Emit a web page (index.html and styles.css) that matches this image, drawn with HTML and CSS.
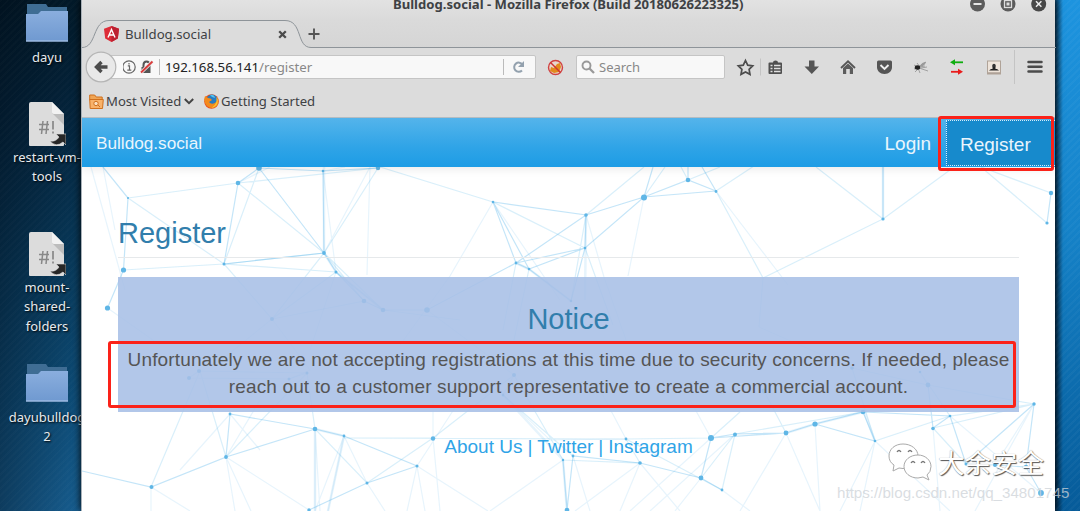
FILE: index.html
```
<!DOCTYPE html>
<html lang="en">
<head>
<meta charset="utf-8">
<title>Bulldog.social</title>
<link rel="stylesheet" href="styles.css">
</head>
<body>
<svg width="0" height="0" class="defs">
  <defs>
    <linearGradient id="fold" x1="0" y1="0" x2="0" y2="1"><stop offset="0" stop-color="#8aaede"/><stop offset="1" stop-color="#6f99d0"/></linearGradient>
    <symbol id="folder" viewBox="0 0 42 38"><path d="M1 0h19l2 3h19v20H1z" fill="#3f6d94"/><path d="M0 10h12l3-3h27v30.500H0z" fill="url(#fold)"/><path d="M0 37h42" stroke="#b3caea"/></symbol>
    <symbol id="script" viewBox="0 0 37 45"><path d="M2 0h21l12 12v31q0 1-1 1H1q-1 0-1-1V2q0-2 2-2z" fill="#dcdcdc"/><path d="M23 11l12 12V12z" fill="#bdbdbd"/><path d="M23 0v10q0 2 2 2h10z" fill="#f2f2f2"/><path d="M10 22.500h10M10 27.500h10M14 19l-1.500 13M18.500 19L17 32" stroke="#888" stroke-width="1.500"/><path d="M24 19v8.500M24 29.500v2" stroke="#888" stroke-width="1.700"/><path d="M27 32h10v11l-3-3q-7 6-13-1 6 1 9-4z" fill="#272727" stroke="#ddd" stroke-width=".6"/></symbol>
  </defs>
</svg>
<div class="desktop">
  <div class="shortcuts">
    <div class="slot first"><svg class="folder"><use href="#folder"/></svg><span>dayu</span></div>
    <div class="slot"><svg class="script"><use href="#script"/></svg><span>restart-vm-<br>tools</span></div>
    <div class="slot"><svg class="script"><use href="#script"/></svg><span>mount-<br>shared-<br>folders</span></div>
    <div class="slot"><svg class="folder"><use href="#folder"/></svg><span>dayubulldog<br>2</span></div>
  </div>

  <div class="window">
    <div class="titlebar">
      <div class="title">Bulldog.social - Mozilla Firefox (Build 20180626223325)</div>
      <svg class="controls" width="80" height="13" viewBox="0 0 80 13"><g fill="#5c5c5c"><circle cx="8.500" cy="4" r="7.500"/><circle cx="39" cy="4" r="7.500"/><circle cx="69.700" cy="4" r="7.500" fill="#484848"/></g><path d="M4.500 4h8" stroke="#e5e5e5" stroke-width="2"/><rect x="35.500" y=".5" width="7" height="7" fill="none" stroke="#ddd" stroke-width="1.300"/><rect x="37.500" y="2.500" width="3" height="3" fill="#ddd"/><path d="M67 1.300l5.400 5.400m0-5.400L67 6.700" stroke="#eee" stroke-width="1.500"/></svg>
    </div>
    <div class="tabs">
      <svg class="tabshape" width="974" height="28" viewBox="0 0 974 28"><path d="M0 26.500C15 26.500 10 .5 27 .5H203C221 .5 214 27.500 229 27.500V28H0z" fill="#dcdcdc"/><path d="M0 27.500C15 27.500 10 .5 27 .5H203C221 .5 214 27.500 229 27.500H974" fill="none" stroke="#8e9499"/></svg>
      <div class="tab">
        <svg width="15" height="16" viewBox="0 0 15 16"><path d="M7.500 0L15 2.700l-1.200 9.800-6.300 3.500-6.300-3.500L0 2.700z" fill="#dd2c38"/><path d="M7.500 0L15 2.700l-1.200 9.800-6.300 3.500z" fill="#bd2031"/><path d="M4 11.500l3.500-8 3.500 8M5 9h5" stroke="#fff" stroke-width="1.400" fill="none"/></svg>
        <span class="tabtext">Bulldog.social</span>
        <svg width="9" height="9" viewBox="0 0 9 9"><path d="M1.200 1.200l6.600 6.600m0-6.600L1.200 7.800" stroke="#4b4b4b" stroke-width="2.300"/></svg>
      </div>
      <svg class="plus" width="12" height="12" viewBox="0 0 12 12"><path d="M6 .5v11M.5 6h11" stroke="#555" stroke-width="1.900"/></svg>
    </div>

    <div class="nav">
      <svg class="back" width="32" height="32" viewBox="0 0 32 32"><circle cx="16" cy="16" r="14.800" fill="#e9e9e9" stroke="#b5b5b5" stroke-width="1.200"/><path d="M22.500 16H11.500M16.500 11l-5 5 5 5" fill="none" stroke="#4c4c4c" stroke-width="3.400"/></svg>
      <div class="urlbar">
        <svg width="44" height="20" viewBox="0 0 44 20"><circle cx="6" cy="10" r="6.200" fill="none" stroke="#666" stroke-width="1.200"/><path d="M4.800 8.800h1.700v4M4.300 13.200h4M6 6v1.500" stroke="#666" stroke-width="1.200" fill="none"/><path d="M18.500 10h9v6h-9z" fill="#555"/><path d="M20.500 10V8q0-3.500 3-3.500t3 3.500v2" fill="none" stroke="#555" stroke-width="2"/><path d="M18 15.500L29.500 4.500" stroke="#e8e8e8" stroke-width="3.500"/><path d="M18 15.500L29.500 4.500" stroke="#d93b3b" stroke-width="1.800"/><path d="M36.500 2v16" stroke="#bbb"/></svg>
        <span class="address"><b>192.168.56.141</b>/register</span>
        <svg class="reload" width="32" height="22" viewBox="0 0 32 22"><path d="M.5 3v16" stroke="#bbb"/><path d="M19 14.500a4.600 4.600 0 1 1 .5-6" fill="none" stroke="#93a1ae" stroke-width="2"/><path d="M21 5v6h-6z" fill="#93a1ae"/></svg>
      </div>
      <svg class="noscript" width="17" height="17" viewBox="0 0 17 17"><circle cx="8.500" cy="8.500" r="7" fill="#e8d6cd" stroke="#d04242" stroke-width="1.400"/><path d="M3 12l1-4 3 1 3-4 3-1 1 4-2 5-5 1z" fill="#e2891c"/><path d="M3.500 3.500l10 10" stroke="#cf3333" stroke-width="1.400"/></svg>
      <div class="search"><svg width="14" height="14" viewBox="0 0 14 14"><circle cx="5.500" cy="5.500" r="4" fill="none" stroke="#999" stroke-width="1.900"/><path d="M8.500 8.500l4.500 4.500" stroke="#999" stroke-width="2.300"/></svg><span>Search</span></div>
      <svg class="tools" width="319" height="34" viewBox="736 50 319 34">
        <path d="M745.500 60.500l2.200 4.600 5 .7-3.600 3.500.9 5-4.500-2.400-4.500 2.400.9-5-3.600-3.500 5-.7z" fill="none" stroke="#4c4c4c" stroke-width="1.700"/>
        <path d="M760.500 58.500v17M1014.500 50v34" stroke="#c4c4c4"/>
        <path d="M768.500 63.500q0-1 1-1h3.500q0-2 2.500-2t2.500 2h3q1 0 1 1v9.500q0 1-1 1h-11.500q-1 0-1-1z" fill="#505050"/><path d="M770.500 65.500h2M774 65.500h6.500M770.500 68.500h2M774 68.500h6.500M770.500 71.500h2M774 71.500h6.500" stroke="#e0e0e0" stroke-width="1.300"/>
        <path d="M809 60.500h5.500v6h4.500l-7.200 7.500-7.300-7.500h4.500z" fill="#555"/>
        <path d="M841 68l7-6.700 7 6.700" fill="none" stroke="#555" stroke-width="1.800"/><path d="M843 68l5-4.500 5 4.500v6h-3.200v-5h-3.600v5H843z" fill="#5c5c5c"/>
        <path d="M877 62q0-1.500 1.500-1.500h12q1.500 0 1.500 1.500v5c0 4-3 7-7.500 7s-7.500-3-7.500-7z" fill="#555"/><path d="M880.500 65l4 4 4-4" fill="none" stroke="#eee" stroke-width="1.900"/>
        <path d="M914 65l4 2 8-5M915 72l4-4 9 3M914 69l5-2M917 63l3 4 5-1M921 68l6-1M918 68l2 5" stroke="#999" stroke-width=".9" fill="none"/><ellipse cx="917.500" cy="67.500" rx="2.700" ry="2.200" fill="#222"/><path d="M920 66q2-4 6-4-1 4-6 5z" fill="#999"/>
        <path d="M953 62.300h10" stroke="#10ad10" stroke-width="1.800"/><path d="M950 62.300l5-3v6z" fill="#10ad10"/><path d="M951 71.800h9" stroke="#e81b1b" stroke-width="1.800"/><path d="M963 71.800l-5-3v6z" fill="#e81b1b"/>
        <rect x="987.500" y="61" width="13" height="13" fill="#eee4da" stroke="#b0a398"/><path d="M989 70.500h10l-2-1.500h-1.500v-3h-3v3H991z" fill="#222"/><circle cx="994" cy="65.500" r="1.700" fill="#333"/><path d="M988 73h12" stroke="#8e8076"/>
        <path d="M1028.500 62h13M1028.500 66.800h13M1028.500 71.600h13" stroke="#4b4b4b" stroke-width="2.500" stroke-linecap="round"/>
      </svg>
    </div>
    <div class="bookmarks">
      <svg width="15" height="15" viewBox="0 0 15 15"><path d="M.7 1h5l1.500 2h6v3H.7z" fill="#f0a555" stroke="#d0701d"/><path d="M.7 5.500h13.600l-.8 9H1.200z" fill="#f8b26a" stroke="#d0701d"/><circle cx="7" cy="9.500" r="2.200" fill="#fce0bd" stroke="#cf7020"/><path d="M9 11l2 2" stroke="#cf7020"/></svg>
      <span class="mv">Most Visited</span>
      <svg class="chev" width="10" height="7" viewBox="0 0 10 7"><path d="M.8 1l4.200 4.200L9.200 1" fill="none" stroke="#444" stroke-width="2"/></svg>
      <svg width="15" height="15" viewBox="0 0 15 15"><circle cx="7.500" cy="7.500" r="7.300" fill="#e9501c"/><circle cx="8" cy="6" r="5.400" fill="#267bc2"/><path d="M6 1q4-1 5 3l-3-1z" fill="#53c3ee"/><path d="M1 2l3 2q3 0 4 2l-3 2q2 3 6 1 3-2 2-6 3 5 0 9-5 4-10 0Q-1 8 1 2z" fill="#f38a1c"/><path d="M12.500 3q2.500 4 0 8-2 2.500-5 3 4-3 5-6z" fill="#fac72f"/></svg>
      <span class="gs">Getting Started</span>
    </div>

    <div class="page">
      <svg class="network" width="974" height="344" viewBox="82 167 974 344">
        <g fill="none" stroke="#53b4ea" stroke-width="1.200">
          <path opacity=".34" d="M103 167L128 198L123.500 270L107.500 308M238 183L259 168L323 171L378 168M238 183L224 264L324 253L323 171M259 168L324 253L336 272L364 301L383 310H427L516 263L529 269L571 301L585 248L586 215L493 202L516 263L586 215L644 197L688 180L716 191L644 197L585 248L516 263M493 202L529 269L585 248M688 180V167M644 197L653 167M716 191L702 167M1051 193L1047 223M883 219V167M123.500 270L107.500 308M82 471L151 487L226 457L230 414L315 429L344 436L417 466L367 483L309 510M226 457L315 429M563 460L567 510L573 456L640 463L701 478L722 490M701 478L711 438L735 434L786 433L815 424L863 412L875 441L815 424M711 438L786 433M863 412L950 416L933 428L928 385M950 416L966 464L1034 404L1026 467L1041 493M966 464L995 465L1026 467"/>
          <path opacity=".22" d="M128 198L238 183L378 168L324 253L224 264L128 198M224 264L123.500 270M238 183L324 253M259 168L224 264M336 272L224 264L272 319L324 253L364 301L272 319L336 272L383 310M324 253L383 310L460 320M493 202L380 167M493 202L585 248M586 215L644 167M586 215L571 301M585 248L613 325M516 263L503 330M529 269L514 340M644 197L665 167M688 180L681 167M688 180L720 167M716 191L763 278L759 327M716 191L760 162M763 278L883 219L816 167M883 219L950 170M981 167L1051 193M981 167L1047 223M189 378L199 371L307 373L289 379L189 378M151 487L200 371L226 457L307 373L315 429L367 483L433 438L514 375L503 395M433 438H344L626 439L711 438M514 375L563 460L640 463L626 439L722 490M503 395L573 456M711 438L740 412M701 478L735 434L722 490M735 434L863 412M786 433L764 391M852 368L875 441L950 416M852 368L928 385L920 372L950 416L1034 404L933 428L966 464M928 385L1034 404"/>
          <path opacity=".14" d="M107.500 308L160 345M238 183L270 167M323 171L345 167M324 253L370 167L367 275M323 171L336 272L310 350M493 202L450 276L400 345M493 202L560 300M586 215L604 277L626 340M644 197L628 276M716 191L788 285M103 167L115 230M91 167L125 290M272 319L310 370L289 379M272 319L220 361M427 310L514 375M759 327L852 368M151 487V511M151 487L190 511M226 457L309 510M226 457L235 511M226 457L251 511M315 429V511L344 436L367 483L385 511M315 429L320 511M344 436L328 511M417 466L407 511M417 466L425 511M417 466L488 511M433 438V400M433 438L440 511M563 460L490 511M573 456L590 511M640 463L575 511M640 463L620 511M640 463L680 511M701 478L675 511M711 438L630 511M735 434L650 511M722 490L750 511M786 433L740 511M786 433L820 511M815 424L820 511M875 441L840 511M875 441L860 511M875 441L950 511M933 428L940 511M950 416L1041 493M995 465L1034 404L975 511M230 414L180 470M226 457L260 400M230 414L260 450M417 466L460 400M503 395L550 440L626 439M626 439L600 390M711 438L690 400"/>
          <path stroke-width="2.500" opacity=".14" d="M324 167V253L336 272L383 310M516 263L529 269L571 301M586 215L585 300M315 429L344 436M315 429V511M344 436L328 511M503 395L563 460L567 511M786 433L815 424L863 412M864 412L875 441M883 167V219"/>
        </g>
        <g fill="#5fb6e6"><circle cx="107.500" cy="308" r="2.600"/><circle cx="123.500" cy="270" r="2.600"/><circle cx="128" cy="198" r="1"/><circle cx="238" cy="183" r="2.300"/><circle cx="259" cy="168" r="2.800"/><circle cx="323" cy="171" r="1.300"/><circle cx="378" cy="168" r="2.200"/><circle cx="324" cy="253" r="1.900"/><circle cx="224" cy="264" r="1.500"/><circle cx="336" cy="272" r="1.500"/><circle cx="364" cy="301" r="2.300"/><circle cx="383" cy="310" r="2.300"/><circle cx="272" cy="319" r="2"/><circle cx="427" cy="310" r="2.800"/><circle cx="493" cy="202" r="1.300"/><circle cx="586" cy="215" r="1.800"/><circle cx="644" cy="197.500" r="3"/><circle cx="688" cy="180" r="2.300"/><circle cx="716" cy="191.500" r="1.400"/><circle cx="585" cy="248" r="1.300"/><circle cx="516" cy="263" r="1.400"/><circle cx="529" cy="269" r="1.300"/><circle cx="571" cy="301" r="1.300"/><circle cx="883" cy="219" r="1.600"/><circle cx="1051" cy="193" r="2.200"/><circle cx="1047" cy="223" r="1.600"/><circle cx="199" cy="371" r="2"/><circle cx="189" cy="378" r="2"/><circle cx="289" cy="379" r="1.500"/><circle cx="307" cy="373" r="1.500"/><circle cx="230" cy="414" r="1.400"/><circle cx="315" cy="429" r="2.300"/><circle cx="344" cy="436" r="1.400"/><circle cx="226" cy="457" r="1.900"/><circle cx="151.500" cy="487" r="2"/><circle cx="367" cy="483" r="1.500"/><circle cx="417" cy="466" r="1.500"/><circle cx="309" cy="510" r="1.700"/><circle cx="433" cy="438.500" r="2.200"/><circle cx="514" cy="375" r="2"/><circle cx="503" cy="395" r="1.400"/><circle cx="563" cy="460" r="1.200"/><circle cx="573" cy="456" r="1.400"/><circle cx="567" cy="510" r="2.300"/><circle cx="626" cy="439" r="1.400"/><circle cx="640" cy="463" r="1.800"/><circle cx="701" cy="478" r="2.400"/><circle cx="711" cy="438" r="3"/><circle cx="722" cy="490" r="1.400"/><circle cx="735" cy="434.500" r="2"/><circle cx="786" cy="433" r="2.400"/><circle cx="815" cy="424" r="2.600"/><circle cx="863" cy="412" r="2.300"/><circle cx="875" cy="441" r="1.300"/><circle cx="764" cy="391" r="2.400"/><circle cx="852" cy="368" r="1.800"/><circle cx="928" cy="385" r="2.400"/><circle cx="920" cy="372" r="1.300"/><circle cx="950" cy="416" r="1.300"/><circle cx="933" cy="428.500" r="1.800"/><circle cx="1034" cy="404" r="1.700"/><circle cx="966" cy="464" r="1.500"/><circle cx="995" cy="465" r="2"/><circle cx="1026" cy="467" r="2.200"/><circle cx="1041" cy="493" r="2.900"/></g>
      </svg>
      <header class="navbar"><span class="brand">Bulldog.social</span><span class="login">Login</span><span class="register">Register</span></header>
      <main>
        <h1>Register</h1>
        <section class="notice"><h2>Notice</h2><p>Unfortunately we are not accepting registrations at this time due to security concerns. If needed, please<br>reach out to a customer support representative to create a commercial account.</p></section>
        <footer><span>About Us</span><i>|</i><span>Twitter</span><i>|</i><span>Instagram</span></footer>
      </main>
    </div>
  </div>
</div>
<div class="mark mark-nav"></div>
<div class="mark mark-text"></div>
<div class="wechat">
  <svg width="44" height="38" viewBox="0 0 44 38"><g fill="#fff" stroke="#aaa" stroke-width="1"><path d="M15 1C7 1 1 6 1 13q0 6 5 9l-1 6 6-3q4 1 8 0 11-3 11-12C30 6 23 1 15 1z"/><path d="M30 12c-8 0-14 5-14 11.500S22 35 30 35l5-1 6 3-2-5q4-3 4-8.500C43 17 37 12 30 12z"/></g><path d="M9 9q2-3 4 0M20 9q2-3 4 0M23 20q2-3 4 0M33 20q2-3 4 0" fill="none" stroke="#777" stroke-width="1.300"/></svg>
  <span>大余安全</span>
</div>
<div class="source">https://blog.csdn.net/qq_34801745</div>
</body>
</html>
```
FILE: styles.css
```
* { box-sizing: border-box; }
body { margin: 0; width: 1080px; height: 511px; overflow: hidden; font-family: "Liberation Sans", Arial, sans-serif; }
svg { flex: none; display: block; }
.defs { position: absolute; }
.desktop {
  display: flex; width: 1080px; height: 511px;
  background: repeating-linear-gradient(135deg, rgba(255,255,255,.014) 0 2px, transparent 2px 5px),
    linear-gradient(90deg, rgba(0,8,18,.4), transparent 82px),
    linear-gradient(180deg, #021a2a 0, #04263f 120px, #083b5d 260px, #0e4f7b 400px, #175f92 511px);
}
.desktop::after { content: ""; width: 25px; background: repeating-linear-gradient(135deg, rgba(255,255,255,.03) 0 2px, transparent 2px 5px), linear-gradient(90deg, rgba(0,20,40,.65), transparent 8px), linear-gradient(180deg, #1d94df, #1582c8 45%, #065b99); }
.shortcuts { width: 81px; overflow: hidden; padding-top: 1px; font: 13px/19.4px "Noto Sans", sans-serif; color: #e6eaee; text-shadow: 1px 1px 2px #000; }
.slot { width: 94px; height: 130px; text-align: center; display: flex; flex-direction: column; align-items: center; white-space: nowrap; }
.slot.first { height: 100px; }
.folder { width: 42px; height: 38px; margin: 3px 0 6px; }
.script { width: 37px; height: 45px; margin: 1px 0 1px; }
.window { position: relative; width: 974px; height: 511px; background: #dcdcdc; border-left: 1px solid #a9b1b8; box-shadow: 0 0 8px #000; color: #3e4144; font-family: "Noto Sans", sans-serif; }
.titlebar { height: 20px; display: flex; justify-content: flex-end; background: linear-gradient(#e2e2e2, #dadada); }
.title { flex: 1; margin-top: -5px; padding-left: 311px; font-size: 13.1px; line-height: 19px; font-weight: 700; white-space: nowrap; }
.controls { margin-right: 6px; }
.tabs { height: 28px; background: linear-gradient(#dadada, #d5d5d5); display: flex; align-items: center; position: relative; font-size: 13.2px; }
.tabshape { position: absolute; left: 0; top: 0; }
.tab { position: relative; width: 205px; padding-left: 22px; display: flex; align-items: center; }
.tabtext { padding-left: 6px; flex: 1; }
.plus { position: relative; margin-left: 21px; }
.nav { height: 37px; display: flex; align-items: center; padding: 1px 0 0 3px; }
.back { position: relative; }
.urlbar { height: 24px; width: 434px; margin-left: -15px; padding-left: 20px; border: 1px solid #c5c5c5; border-radius: 2px; background: #f8f8f8; display: flex; align-items: center; font-size: 13.25px; }
.address { margin-left: -2px; flex: 1; color: #888; }
.address b { font-weight: 400; color: #222; }
.noscript { margin-left: 11px; }
.search { margin-left: 12px; width: 149px; height: 24px; border: 1px solid #c5c5c5; border-radius: 2px; background: #f8f8f8; display: flex; align-items: center; gap: 4px; padding-left: 4px; font-size: 13px; color: #888; }
.tools { margin-left: auto; }
.bookmarks { height: 33px; display: flex; align-items: center; padding-left: 7px; border-bottom: 1px solid #b4bcc2; font-size: 13.1px; white-space: nowrap; }
.mv { padding-left: 2px; width: 80px; }
.chev { margin: 0 10px 0 0; }
.gs { padding-left: 2px; }
.page { position: relative; height: 393px; background: #fff; overflow: hidden; font-family: "Liberation Sans", Arial, sans-serif; }
.network { position: absolute; left: 0; top: 49px; }
.navbar { position: relative; height: 49px; background: linear-gradient(#54b4eb, #2fa4e7 60%, #1d9ce5); box-shadow: 0 1px 10px rgba(0,0,0,.1); display: flex; align-items: center; color: #e9f5fd; padding: 2px 0 0 14px; }
.brand { font-size: 17.2px; flex: 1; }
.login { font-size: 19px; margin-right: 15px; }
.register { width: 109px; height: 46px; line-height: 47px; margin: -2px 0 0; padding-left: 13px; background: #178acc; border: 1px dotted #d5ebf9; border-right: 0; font-size: 19px; }
main { position: relative; padding: 44px 36px 0; }
h1, h2 { font-weight: 400; color: #317eac; font-size: 29px; margin: 0; }
h1 { height: 47px; line-height: 45px; border-bottom: 1px solid #e6e9eb; margin-bottom: 19px; }
.notice { height: 135px; background: rgba(167,191,230,.88); padding-top: 24px; text-align: center; width: 901px; }
h2 { line-height: 37px; }
p { margin: 8px 0 0; font-size: 19px; letter-spacing: .14px; line-height: 27px; color: #555; white-space: nowrap; }
footer { display: flex; justify-content: center; margin-top: 21px; font-size: 19px; line-height: 27px; color: #2fa4e7; }
footer i { font-style: normal; padding: 0 5px; }
.mark { position: absolute; border: 3px solid #fb2219; border-radius: 3px; }
.mark-nav { left: 938px; top: 116px; width: 116px; height: 55px; }
.mark-text { left: 108px; top: 341px; width: 908px; height: 67px; }
.wechat { position: absolute; left: 888px; top: 443px; display: flex; align-items: center; }
.wechat span { font: 26.500px/36px "Noto Sans CJK SC", sans-serif; color: #fff; margin-left: 6px; text-shadow: 1px 1px 1px #555, 0 0 1px #999; }
.source { position: absolute; left: 837px; top: 484px; font-size: 15.15px; line-height: 18px; color: rgba(205,210,215,.75); white-space: nowrap; }
```
